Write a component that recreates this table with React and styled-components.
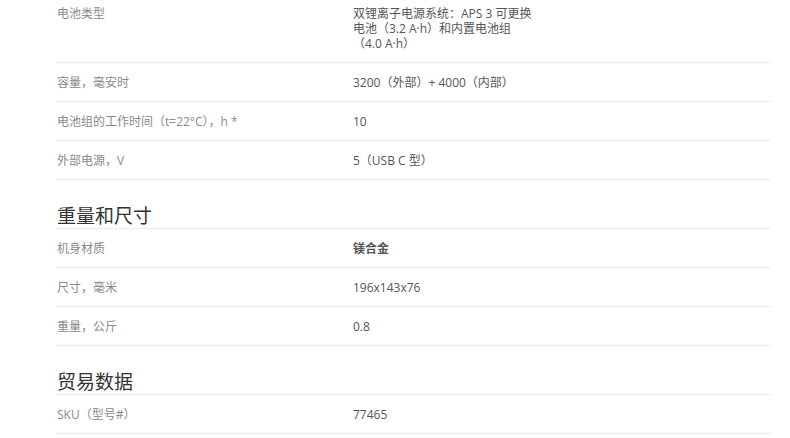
import React from "react";
import styled, { createGlobalStyle } from "styled-components";

const GlobalStyle = createGlobalStyle`
	html, body {
		margin: 0;
		padding: 0;
		background: #fff;
	}
	body {
		font-family: "Open Sans", "Noto Sans CJK SC", sans-serif;
		overflow: hidden;
	}
`;

const Page = styled.div`
	width: 714px;
	margin: -6px 0 0 57px;
`;

const Section = styled.section`
	display: flex;
	flex-direction: column;
`;

const Heading = styled.h2`
	margin: 0;
	padding: 23px 0 1px;
	font-size: 19px;
	line-height: 24px;
	font-weight: 400;
	color: #333;
	border-bottom: 1px solid #ebebeb;
	font-family: "Noto Sans CJK SC", sans-serif;
`;

const Row = styled.div`
	display: grid;
	grid-template-columns: 296px 1fr;
	padding: 12px 0 11px;
	border-bottom: 1px solid #ebebeb;
	font-size: 12px;
	line-height: 15px;
`;

const Label = styled.div`
	color: #8a8a8a;
`;

const Value = styled.div`
	color: #555;
	font-weight: ${props => props.bold ? 600 : 400};
`;

const sections = [
	{
		rows: [
			["电池类型", <>双锂离子电源系统：APS 3 可更换<br />电池（3.2 A·h）和内置电池组<br />（4.0 A·h）</>],
			["容量，毫安时", "3200（外部）+ 4000（内部）"],
			["电池组的工作时间（t=22°C），h *", "10"],
			["外部电源，V", "5（USB C 型）"],
		],
	},
	{
		title: "重量和尺寸",
		rows: [
			["机身材质", "镁合金", true],
			["尺寸，毫米", "196x143x76"],
			["重量，公斤", "0.8"],
		],
	},
	{
		title: "贸易数据",
		rows: [
			["SKU（型号#）", "77465"],
		],
	},
];

const App = () => {
	return (
		<>
			<GlobalStyle />
			<Page>
				{sections.map((section, i) => (
					<Section key={i}>
						{section.title && <Heading>{section.title}</Heading>}
						{section.rows.map(([label, value, bold], j) => (
							<Row key={j}>
								<Label>{label}</Label>
								<Value bold={bold}>{value}</Value>
							</Row>
						))}
					</Section>
				))}
			</Page>
		</>
	);
};

export default App;
